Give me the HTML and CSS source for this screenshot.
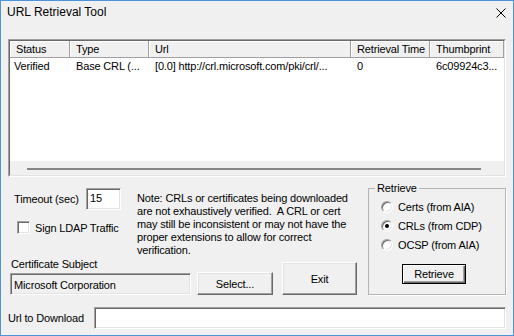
FILE: index.html
```html
<!DOCTYPE html>
<html>
<head>
    <title>URL Retrieval Tool</title>
    <meta charset="utf-8" />
    <link rel="stylesheet" href="styles.css">
</head>
<body>
    <div class="window">
        <div class="titlebar">
            <span class="title">URL Retrieval Tool</span>
            <svg class="close" width="10" height="10" viewBox="0 0 10 10"><path d="M0.5 0.5 L9.5 9.5 M9.5 0.5 L0.5 9.5" stroke="#000" stroke-width="1" fill="none"/></svg>
        </div>
        <div class="list">
            <div class="list-inner">
                <div class="list-head cols">
                    <div>Status</div><div>Type</div><div>Url</div><div>Retrieval Time</div><div>Thumbprint</div>
                </div>
                <div class="list-row cols">
                    <div>Verified</div><div>Base CRL (...</div><div>[0.0] http://crl.microsoft.com/pki/crl/...</div><div>0</div><div>6c09924c3...</div>
                </div>
                <div class="list-fill"></div>
                <div class="hscroll"><div class="thumb"></div></div>
            </div>
        </div>
        <div class="lower">
            <div class="left">
                <div class="top">
                    <div class="opts">
                        <div class="timeout">
                            <span class="timeout-label">Timeout (sec)</span>
                            <div class="field short">15</div>
                        </div>
                        <div class="check"><span class="checkbox"></span>Sign LDAP Traffic</div>
                    </div>
                    <p class="note">Note: CRLs or certificates being downloaded<br>are not exhaustively verified.&nbsp; A CRL or cert<br>may still be inconsistent or may not have the<br>proper extensions to allow for correct<br>verification.</p>
                </div>
                <div class="bottom">
                    <div class="subject">
                        <div class="caption">Certificate Subject</div>
                        <div class="field readonly">Microsoft Corporation</div>
                    </div>
                    <div class="btn select">Select...</div>
                    <div class="btn exit">Exit</div>
                </div>
            </div>
            <fieldset class="group">
                <legend>Retrieve</legend>
                <div class="radio first"><span class="dot"></span>Certs (from AIA)</div>
                <div class="radio"><span class="dot on"></span>CRLs (from CDP)</div>
                <div class="radio"><span class="dot"></span>OCSP (from AIA)</div>
                <div class="btn default retrieve">Retrieve</div>
            </fieldset>
        </div>
        <div class="url-row">
            <span class="url-label">Url to Download</span>
            <div class="field url"></div>
        </div>
    </div>
</body>
</html>
```

FILE: styles.css
```css
* { box-sizing: border-box; }
body { margin: 0; font: 11px "Liberation Sans", Arial, sans-serif; letter-spacing: -0.16px; color: #000; }

.window { width: 514px; height: 336px; border: 1px solid #4c93d8; background: #f0f0f0; display: flex; flex-direction: column; }

.titlebar { height: 38px; flex: none; display: flex; justify-content: space-between; align-items: flex-start; padding: 4px 7px 0 6px; font-size: 12px; line-height: 15px; letter-spacing: 0; }
.close { margin-top: 3px; }

/* list view */
.list { margin: 0 7px; height: 138px; flex: none; border: 1px solid; border-color: #a0a0a0 #fff #fff #a0a0a0; }
.list-inner { height: 100%; border: 1px solid; border-color: #696969 #e3e3e3 #e3e3e3 #696969; background: #fff; display: flex; flex-direction: column; }
.cols { display: grid; grid-template-columns: 60px 79px 202px 79px 1fr; white-space: nowrap; }
.list-head { height: 17px; line-height: 16px; background: #f0f0f0; border-bottom: 1px solid #a0a0a0; }
.list-head div { padding-left: 6px; overflow: hidden; border-right: 1px solid #a0a0a0; box-shadow: inset 1px 1px 0 #fff; }
.list-row { height: 17px; line-height: 17px; }
.list-row div { padding-left: 6px; overflow: hidden; }
.list-row div:first-child { padding-left: 4px; }
.list-fill { flex: 1; }
.hscroll { height: 14px; flex: none; background: #f0f0f0; padding: 7px 0 0 17px; }
.thumb { width: 454px; height: 2px; background: #868686; }

/* sunken boxes */
.field { height: 22px; border: 1px solid; border-color: #a0a0a0 #fff #fff #a0a0a0; box-shadow: inset 1px 1px 0 #696969, inset -1px -1px 0 #e3e3e3; background: #fff; padding: 3px 0 0 3px; line-height: 14px; }
.field.readonly { background: #f0f0f0; padding-top: 4px; }

/* lower part */
.lower { display: flex; height: 118px; flex: none; padding: 0 7px 0 9px; }
.left { width: 347px; display: flex; flex-direction: column; }
.top { display: flex; height: 80px; }
.opts { width: 127px; padding-top: 11px; }
.timeout { display: flex; align-items: center; height: 22px; padding-left: 4px; }
.timeout-label { width: 72px; }
.field.short { width: 35px; padding-top: 2px; }
.check { display: flex; align-items: center; height: 17px; margin-top: 9px; padding-left: 7px; }
.checkbox { width: 13px; height: 13px; margin-right: 5px; background: #fff; border: 1px solid; border-color: #a0a0a0 #fff #fff #a0a0a0; box-shadow: inset 1px 1px 0 #696969, inset -1px -1px 0 #e3e3e3; }
.note { margin: 15px 0 0; line-height: 13px; white-space: nowrap; }

.bottom { flex: 1; display: flex; align-items: flex-end; }
.subject { width: 181px; }
.caption { line-height: 14px; margin-bottom: 2px; padding-left: 1px; }

.btn { display: flex; align-items: center; justify-content: center; border: 1px solid; border-color: #fff #696969 #696969 #fff; box-shadow: inset -1px -1px 0 #a0a0a0, inset 1px 1px 0 #e3e3e3; background: #f0f0f0; }
.btn.default { border-color: #000; box-shadow: inset 1px 1px 0 #fff, inset -1px -1px 0 #696969, inset -2px -2px 0 #a0a0a0; }
.select { width: 76px; height: 23px; margin-left: 6px; }
.exit { width: 75px; height: 33px; margin-left: 9px; }

/* retrieve group */
.group { width: 138px; margin: 5px 0 0 11px; height: 113px; padding: 0; border: 1px solid #b4b4b4; box-shadow: 1px 1px 0 #fff; min-width: 0; }
.group legend { margin-left: 6px; padding: 0 2px; line-height: 13px; }
.radio { display: flex; align-items: center; height: 19px; padding-left: 12px; }
.radio.first { margin-top: 2px; }
.dot { width: 12px; height: 12px; margin-right: 5px; border-radius: 50%; background: #fff; border: 1px solid; border-color: #a0a0a0 #fff #fff #a0a0a0; box-shadow: inset 1px 1px 0 #696969, inset -1px -1px 0 #e3e3e3; display: flex; align-items: center; justify-content: center; }
.dot.on::after { content: ""; width: 4px; height: 4px; border-radius: 50%; background: #000; }
.retrieve { width: 64px; height: 20px; margin: 10px 0 0 33px; }

/* url row */
.url-row { display: flex; align-items: center; padding: 12px 7px 0 7px; }
.url-label { width: 86px; }
.field.url { flex: 1; }
```
